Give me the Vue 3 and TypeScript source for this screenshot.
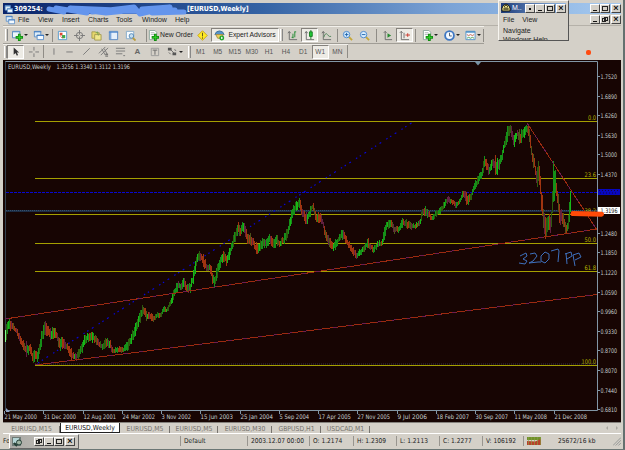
<template>
  <div class="desktop">
    <header class="titlebar">
      <svg class="app-icon" viewBox="0 0 12 12">
        <path v-for="(s, i) in icons.windows" :key="i" :d="s.d" :fill="s.fill || 'none'" :stroke="s.stroke || 'none'" />
      </svg>
      <b class="account">309254:</b>
      <b class="doc">[EURUSD,Weekly]</b>
      <div class="win-buttons">
        <i class="min"></i><i class="max"></i><i class="close">×</i>
      </div>
      <svg class="scribble" viewBox="0 0 146 15">
        <path d="M7 6L22 9L14 5L45 10L28 5L75 7L50 9L92 4L98 11L128 4L100 6L133 7L110 10L142 9L84 8L64 10L40 7" />
      </svg>
    </header>

    <nav class="menubar">
      <svg class="app-icon" viewBox="0 0 12 12">
        <path v-for="(s, i) in icons.windows" :key="i" :d="s.d" :fill="s.fill || 'none'" :stroke="s.stroke || 'none'" />
      </svg>
      <span v-for="m in menus" :key="m.label" :style="{ width: m.w + 'px' }">{{ m.label }}</span>
      <div class="win-buttons">
        <i class="min"></i><i class="restore"></i><i class="close">×</i>
      </div>
    </nav>

    <div v-for="(bar, b) in toolbars" :key="b" class="toolbar" :class="'bar' + b">
      <div
        v-for="(t, i) in bar"
        :key="i"
        class="tool"
        :class="[t.kind, { pressed: t.pressed }]"
        :style="{ width: t.w + 'px' }"
      >
        <svg v-if="t.icon" viewBox="0 0 12 12" class="icon">
          <path
            v-for="(s, k) in icons[t.icon]"
            :key="k"
            :d="s.d"
            :fill="s.fill || 'none'"
            :stroke="s.stroke || 'none'"
            :stroke-width="s.width || 1"
          />
        </svg>
        <span v-if="t.label">{{ t.label }}</span>
        <em v-if="t.arrow"></em>
      </div>
    </div>

    <main class="chart">
      <svg width="618" height="362" viewBox="3 60 618 362">
        <rect x="3" y="60" width="618" height="362" fill="#170503" />
        <path d="M5.5 410.5V61.5H597.5V410.5Z" fill="none" stroke="#8296a5" />
        <path d="M5.5 62V410" stroke="#34414f" />
        <path d="M475 62h6l-3 3.5z" fill="#7893a5" />

        <path d="M6 211H597" stroke="#1d2c43" stroke-width="2" />
        <path d="M6 210.5H597" stroke="#34506c" stroke-dasharray="1 1" />
        <path d="M6 192.5H597" stroke="#0808d0" stroke-dasharray="3 1" />

        <g v-for="f in fibs" :key="f.label">
          <line x1="35" x2="597" :y1="f.y" :y2="f.y" stroke="#a5a000" />
          <text
            :x="596 - f.w"
            :y="f.y - 1.5"
            :textLength="f.w"
            lengthAdjust="spacingAndGlyphs"
            class="fib"
          >{{ f.label }}</text>
        </g>
        <path d="M35 364H597" stroke="#36334a" stroke-dasharray="1 1" />

        <path d="M38 363L413 122" stroke="#0808d4" stroke-width="1.2" stroke-dasharray="1.5 3 1.5 4 2 6" />

        <g shape-rendering="crispEdges">
          <template v-for="c in candles" :key="c.x">
            <line :x1="c.x" :x2="c.x" :y1="c.high" :y2="c.low" :stroke="c.color" stroke-width="1" />
          </template>
        </g>
        <path d="M5.5 330V342" stroke="#80ff90" />

        <g stroke="#9c2a10" fill="none" shape-rendering="crispEdges">
          <path d="M5 319L597 229" />
          <path d="M35 365L597 294.5" />
          <path d="M527 123L597 230" />
        </g>
        <g stroke="#6e1d50" fill="none" stroke-dasharray="4 11" shape-rendering="crispEdges">
          <path d="M5 319L597 229" />
          <path d="M35 365L597 294.5" />
          <path d="M527 123L597 230" />
        </g>

        <g v-for="p in prices" :key="p.label">
          <path :d="`M597 ${p.y}h3`" stroke="#8296a5" />
          <text v-if="p.shown" x="600.5" :y="p.y + 2" textLength="16.5" lengthAdjust="spacingAndGlyphs">{{ p.label }}</text>
        </g>
        <rect x="598" y="189" width="22" height="6" fill="#0707c0" />
        <path d="M599 190.5h20M600 193h18" stroke="#170540" stroke-dasharray="1 2" />
        <rect x="598" y="207" width="22" height="7" fill="#fff" />
        <text x="600.5" y="213" textLength="17" lengthAdjust="spacingAndGlyphs" class="current">1.3196</text>
        <path d="M573 213.5L601.5 214.2" stroke="#ff4a08" stroke-width="5" stroke-linecap="round" />

        <g v-for="d in dates" :key="d.label">
          <path :d="`M${d.x + 0.5} 411v3`" stroke="#8296a5" />
          <text :x="d.x + 0.5" y="418.5" :textLength="d.w" lengthAdjust="spacingAndGlyphs">{{ d.label }}</text>
        </g>
        <path d="M6 408v4h4z" fill="#8fa4c4" />
        <text x="8" y="69" textLength="43" lengthAdjust="spacingAndGlyphs">EURUSD,Weekly</text>
        <text x="56.5" y="69" textLength="73.5" lengthAdjust="spacingAndGlyphs">1.3256 1.3340 1.3112 1.3196</text>

        <!-- hand-drawn note -->
        <g class="note">
          <path d="M520 256L526 253L527 256L523 259L527 261L525 264L519 263" />
          <path d="M530 254L535 253L537 256L533 261L529 263L538 262L541 262" />
          <path d="M545 252L541 256L541 261L545 263L549 259L549 254L545 252" />
          <path d="M551 251L558 249L559 251L558 262" />
          <path d="M566 253L567 264M565 254L571 252L572 256L567 259" />
          <path d="M573 255L575 266M573 255L579 253L581 257L575 260" />
        </g>
      </svg>
    </main>

    <div class="tabs">
      <div v-for="(t, i) in tabs" :key="i" class="tab" :class="{ active: i === 1 }" :style="{ width: t.w + 'px' }">
        {{ t.label }}
      </div>
      <div class="scroll"><i></i><i class="right"></i></div>
    </div>

    <footer class="status">
      <div v-for="(s, i) in status" :key="i" class="cell" :style="{ width: s.w + 'px' }">{{ s.label }}</div>
      <svg class="traffic" viewBox="0 0 15 8">
        <path d="M0 0h14v3H0z" fill="#71902b" />
        <path d="M0 8V4L8 4.500L14 2V8Z" fill="#b8402a" />
        <path d="M1.5 0V8M4.500 0V8M7.500 0V8M10.500 0V8M13.500 0V8" stroke="#86a345" stroke-width=".6" />
      </svg>
      <span class="kb">25672/16 kb</span>
      <svg class="grip" viewBox="0 0 9 9"><path d="M0 9L9 0M3 9L9 3M6 9L9 6" stroke="#8e9191" /></svg>
    </footer>

    <aside class="popup">
      <div class="popup-title">
        <svg viewBox="0 0 10 10">
          <path d="M1 8Q0 3 5 1Q10 3 9 8Z" fill="#f1e68c" stroke="#151510" />
          <path d="M3 4L5 2L7 4M2 6h6M4 4v3M6 4v3" stroke="#26240f" stroke-width=".8" fill="none" />
        </svg>
        <span>M..</span>
        <div class="win-buttons">
          <i class="dot"></i><i class="min"></i><i class="max"></i><i class="close">×</i>
        </div>
      </div>
      <p><span>File</span><span>View</span></p>
      <p>Navigate</p>
      <p class="cut">Windows Help</p>
    </aside>
    <div class="marker"></div>

    <aside class="mini">
      <svg viewBox="0 0 11 11">
        <path d="M0 1h9v9H0z" fill="#6d7a76" />
        <path d="M1 2h6v5H1z" fill="#b5d4d5" />
        <path d="M7 4a2.5 2.5 0 1 1 0 5a2.5 2.5 0 1 1 0-5" fill="#9fb5a4" stroke="#243f37" />
        <path d="M2 7l3 3" stroke="#243f37" stroke-width="2" />
      </svg>
      <div class="win-buttons">
        <i class="restore"></i><i class="min"></i><i class="max"></i><i class="close">×</i>
      </div>
    </aside>
  </div>
</template>

<script setup lang="ts">
interface Shape {
  d: string;
  fill?: string;
  stroke?: string;
  width?: number;
}

interface Tool {
  w: number;
  kind?: string;
  icon?: string;
  label?: string;
  arrow?: boolean;
  pressed?: boolean;
}

const icons: Record<string, Shape[]> = {
  windows: [
    { d: 'M1.5 1.5h7v6h-7z', fill: '#dcecf8', stroke: '#5c8fc8' },
    { d: 'M1 2h8', stroke: '#3c78c0' },
    { d: 'M4.5 5.5h7v5h-7z', fill: '#f4faff', stroke: '#5c8fc8' },
    { d: 'M4 6h8', stroke: '#3c78c0' },
  ],
  newChart: [
    { d: 'M.5 1.5h8v7h-8z', fill: '#edf5fa', stroke: '#5486b8' },
    { d: 'M1 2h8', stroke: '#5b94cc' },
    { d: 'M8 4v8M4 8h8', stroke: '#138c12', width: 3 },
    { d: 'M8 5v6M5 8h6', stroke: '#31d52c' },
  ],
  market: [
    { d: 'M1.5 1.5h9v9h-9z', fill: '#fff', stroke: '#5599cc' },
    { d: 'M3 3h3v3H3z', fill: '#dc4a34' },
    { d: 'M5.500 5.500h3.500v3.500h-3.500z', fill: '#40a848' },
    { d: 'M4 7l2 2', stroke: '#dc4a34' },
  ],
  target: [
    { d: 'M6 2.5a3.5 3.5 0 1 1 0 7a3.5 3.5 0 1 1 0-7', stroke: '#777' },
    { d: 'M6 0v5M6 7v5M0 6h5M7 6h5', stroke: '#777' },
  ],
  folder: [
    { d: 'M1 2h4l1 1h3v6H1z', fill: '#e7d76b', stroke: '#a59b52' },
    { d: 'M4 5h7v6H4z', fill: '#f0e78b', stroke: '#a59b52' },
    { d: 'M5 3l2-1 1 4', stroke: '#73a34d' },
  ],
  navigator: [
    { d: 'M1.5 1.5h9v9h-9z', fill: '#e5effa', stroke: '#5486c2' },
    { d: 'M1 2.5h10M3 2v8', stroke: '#4c86cc' },
  ],
  tester: [
    { d: 'M1.5 1.5h8v8h-8z', fill: '#f8fcff', stroke: '#83aac9' },
    { d: 'M7 4a2.5 2.5 0 1 1 0 5a2.5 2.5 0 1 1 0-5', fill: '#c4def1', stroke: '#5084b5' },
    { d: 'M8.5 8.5l3 3', stroke: '#b99b3a', width: 2 },
  ],
  order: [
    { d: 'M1.5.5h6l2 2v8h-8z', fill: '#fff', stroke: '#8aa49a' },
    { d: 'M3 3h4M3 5h4', stroke: '#a8aeb4' },
    { d: 'M8 4v8M4 8h8', stroke: '#138c12', width: 3 },
    { d: 'M8 5v6M5 8h6', stroke: '#31d52c' },
  ],
  alert: [
    { d: 'M6 .8L11.2 6L6 11.2L.8 6Z', fill: '#ffea24', stroke: '#c6a31a' },
    { d: 'M6 3v4M6 8v1.5', stroke: '#574a18' },
  ],
  expert: [
    { d: 'M1 5Q2 1 6 1Q10 1 11 5Z', fill: '#5794c8', stroke: '#3b719b' },
    { d: 'M2 5h8l-2 4H4z', fill: '#f0d35b', stroke: '#aa8d42' },
    { d: 'M8.500 6a2.7 2.7 0 1 1 0 5.400a2.7 2.7 0 1 1 0-5.400', fill: '#21a62d' },
    { d: 'M7.8 7.2l2.2 1.500-2.200 1.500z', fill: '#fff' },
  ],
  bars: [
    { d: 'M2.5 2v8.5H11M1 3.5l1.5-2L4 3.5', stroke: '#696969' },
    { d: 'M6.5 4v5M8.5 2v6M8 2h2M5 8h2', stroke: '#218b31' },
  ],
  candle: [
    { d: 'M2.5 2v8.5H11M1 3.5l1.5-2L4 3.5', stroke: '#696969' },
    { d: 'M7.5 0v10', stroke: '#167b21' },
    { d: 'M6 2h3v5H6z', fill: '#20c936', stroke: '#167b21' },
  ],
  line: [
    { d: 'M2.5 2v8.5H11M1 3.5l1.5-2L4 3.5', stroke: '#696969' },
    { d: 'M3 8Q5 2 7 5T11 7', stroke: '#4b8456' },
  ],
  zoomIn: [
    { d: 'M7 7l4 4', stroke: '#c6a738', width: 2 },
    { d: 'M5 1.5a3.5 3.5 0 1 1 0 7a3.5 3.5 0 1 1 0-7', fill: '#d6edff', stroke: '#4786ce' },
    { d: 'M5 3v4M3 5h4', stroke: '#1d63ac' },
  ],
  zoomOut: [
    { d: 'M7 7l4 4', stroke: '#c6a738', width: 2 },
    { d: 'M5 1.5a3.5 3.5 0 1 1 0 7a3.5 3.5 0 1 1 0-7', fill: '#d6edff', stroke: '#4786ce' },
    { d: 'M3 5h4', stroke: '#1d63ac' },
  ],
  scroll: [
    { d: 'M3.5 1.5v9H11M2 3l1.5-1.5L5 3', stroke: '#696969' },
    { d: 'M6 3.5l4 2.5-4 2.5z', fill: '#278b30' },
  ],
  shift: [
    { d: 'M2.5 1.5v9H11M1 3l1.5-1.5L4 3M5.5 3v6', stroke: '#696969' },
    { d: 'M7 5.5h5M9.5 3.5v4', stroke: '#c9362a' },
  ],
  clock: [
    { d: 'M6 1.2a4.8 4.8 0 1 1 0 9.6a4.8 4.8 0 1 1 0-9.6', fill: '#f5faff', stroke: '#3f78c3', width: 2 },
    { d: 'M6 3v3.5h2.5', stroke: '#47566d' },
  ],
  template: [
    { d: 'M1 1.5h10v9H1z', fill: '#f5faff', stroke: '#5594c8' },
    { d: 'M1 2h10', stroke: '#5594c8', width: 2 },
    { d: 'M2 5l2 1 2-1 2 1 2-1', stroke: '#c55d44' },
    { d: 'M2 9l2-1 2 1 2-1 2 1', stroke: '#50a050' },
  ],
  cursor: [{ d: 'M4 1.5v8l2-2 1.5 3 1.3-.7L7.5 7h2.5z', fill: '#333' }],
  cross: [{ d: 'M6.5 1v4M6.5 8v4M1 6.5h4M8 6.5h4', stroke: '#777' }],
  vline: [{ d: 'M6.5 2.5v7', stroke: '#777' }],
  hline: [{ d: 'M2.5 6.5h7', stroke: '#777' }],
  trend: [{ d: 'M2.5 9.5l7-7', stroke: '#777' }],
  channel: [
    { d: 'M1 8l7-7M3 10l8-8M4 3l4 7M7 3l3 6', stroke: '#777' },
    { d: 'M8 9h3M8 11h3', stroke: '#555' },
  ],
  fib: [{ d: 'M1 2.5h10M1 5.5h10M1 8.5h7M9 10.5h2', stroke: '#777' }],
  label: [
    { d: 'M2.5 2.5h8v8h-8z', stroke: '#999' },
    { d: 'M4 4.5h5M6.5 4.5v5', stroke: '#666' },
  ],
  arrows: [
    { d: 'M1 2h4v3H1zM6 7h4v3H6z', fill: '#555' },
    { d: 'M4 4l4 4M8 4l2 1M2 7l2 2', stroke: '#666' },
  ],
};

const menus = [
  { label: 'File', w: 20 },
  { label: 'View', w: 24 },
  { label: 'Insert', w: 26 },
  { label: 'Charts', w: 28 },
  { label: 'Tools', w: 26 },
  { label: 'Window', w: 33 },
  { label: 'Help', w: 20 },
]

const sep = (w = 3): Tool => ({ kind: 'sep', w });
const handle = (w = 4): Tool => ({ kind: 'handle', w });
const btn = (icon: string, w = 17, extra: Partial<Tool> = {}): Tool => ({ icon, w, ...extra });
const period = (label: string, pressed = false): Tool => ({ kind: 'period', label, w: 17.1, pressed });

const toolbars: Tool[][] = [
  [
    handle(6),
    btn('newChart', 21, { arrow: true }),
    btn('windows', 21, { arrow: true }),
    sep(2),
    btn('market', 18),
    btn('target'),
    btn('folder'),
    btn('navigator'),
    btn('tester'),
    { kind: 'gap', w: 6 },
    sep(2),
    btn('order', 47, { kind: 'wide', label: 'New Order' }),
    btn('alert', 17),
    btn('expert', 68, { kind: 'wide', label: 'Expert Advisors', pressed: true }),
    handle(5),
    btn('bars'),
    btn('candle', 17, { pressed: true }),
    btn('line'),
    sep(4),
    btn('zoomIn'),
    btn('zoomOut'),
    sep(6),
    btn('scroll'),
    btn('shift', 17, { pressed: true }),
    sep(5),
    btn('order', 23, { arrow: true }),
    btn('clock', 22, { arrow: true }),
    btn('template', 20, { arrow: true }),
    sep(1),
  ],
  [
    handle(4),
    btn('cursor', 17, { pressed: true }),
    btn('cross', 18),
    sep(3),
    btn('vline', 16),
    btn('hline'),
    btn('trend'),
    btn('channel'),
    btn('fib'),
    { kind: 'letter', label: 'A', w: 17 },
    btn('label'),
    btn('arrows', 23, { arrow: true }),
    handle(6),
    period('M1'),
    period('M5'),
    period('M15'),
    period('M30'),
    period('H1'),
    period('H4'),
    period('D1'),
    period('W1', true),
    period('MN'),
    sep(3),
  ],
];

const fibs = [
  { label: '0.0', y: 121.5, w: 8 },
  { label: '23.6', y: 178.5, w: 11.5 },
  { label: '38.2', y: 214.5, w: 11.5 },
  { label: '50.0', y: 243.5, w: 11.5 },
  { label: '61.8', y: 271.5, w: 11.5 },
  { label: '100.0', y: 365.5, w: 14.5 },
];

const prices = Array.from({ length: 18 }, (_, i) => ({
  label: (1.752 - i * 0.063).toFixed(4),
  y: Math.round(76 + i * 19.6) + 0.5,
  shown: i !== 6 && i !== 7,
}));

const dates = [
  ['21 May 2000', 4], ['31 Dec 2000', 43], ['12 Aug 2001', 83], ['24 Mar 2002', 122],
  ['3 Nov 2002', 161], ['15 Jun 2003', 200], ['25 Jan 2004', 240], ['5 Sep 2004', 279],
  ['17 Apr 2005', 318], ['27 Nov 2005', 357], ['9 Jul 2006', 397], ['18 Feb 2007', 436],
  ['30 Sep 2007', 475], ['11 May 2008', 514], ['21 Dec 2008', 554],
].map(([label, x]) => ({ label: String(label), x: Number(x), w: String(label).length * 2.95 }));

// x, highest and lowest y of the price band
const band: [number, number, number][] = [
  [6, 327, 342], [9, 319, 330], [13, 323, 331], [17, 329, 335], [20, 335, 343], [23, 340, 348],
  [26, 342, 357], [30, 343, 352], [33, 353, 365], [35, 348, 360], [38, 352, 361], [40, 340, 353],
  [42, 330, 345], [45, 321, 333], [49, 328, 338], [52, 328, 341], [56, 329, 340], [60, 338, 350],
  [63, 338, 349], [67, 342, 350], [70, 347, 358], [74, 353, 360], [77, 354, 361], [80, 345, 357],
  [84, 335, 350], [87, 333, 343], [91, 331, 341], [95, 334, 343], [99, 340, 347], [102, 343, 350],
  [106, 338, 348], [110, 339, 348], [113, 347, 355], [118, 346, 352], [124, 346, 353], [128, 341, 350],
  [131, 334, 345], [135, 326, 337], [138, 316, 330], [141, 309, 320], [143, 304, 316], [147, 312, 321],
  [150, 311, 320], [154, 315, 322], [158, 312, 318], [161, 313, 319], [163, 305, 313], [167, 307, 314],
  [170, 300, 307], [173, 292, 302], [178, 281, 290], [182, 283, 290], [184, 276, 288], [187, 285, 292],
  [190, 283, 293], [193, 273, 285], [195, 261, 275], [198, 251, 262], [201, 251, 261], [204, 256, 267],
  [207, 263, 275], [210, 262, 272], [213, 273, 285], [215, 275, 287], [218, 263, 275], [222, 252, 263],
  [225, 252, 262], [227, 256, 267], [230, 247, 258], [233, 236, 248], [236, 227, 240], [238, 220, 235],
  [241, 226, 237], [244, 219, 230], [247, 231, 243], [252, 235, 245], [255, 242, 251], [258, 245, 255],
  [263, 237, 248], [267, 240, 248], [270, 232, 243], [273, 240, 249], [277, 234, 245], [280, 240, 248],
  [283, 236, 245], [287, 229, 241], [290, 216, 228], [293, 205, 218], [296, 202, 212], [300, 196, 207],
  [302, 208, 218], [307, 213, 225], [310, 208, 217], [313, 201, 210], [316, 212, 223], [320, 213, 222],
  [323, 218, 228], [326, 229, 242], [330, 238, 247], [333, 242, 252], [337, 238, 248], [340, 232, 241],
  [343, 229, 240], [347, 237, 245], [350, 243, 250], [353, 246, 255], [357, 252, 259], [362, 247, 254],
  [365, 244, 251], [368, 238, 247], [373, 246, 253], [378, 241, 248], [382, 241, 247], [384, 229, 242],
  [387, 219, 230], [391, 218, 227], [394, 225, 233], [399, 225, 233], [402, 219, 227], [408, 220, 229],
  [413, 224, 230], [417, 222, 228], [420, 219, 226], [423, 206, 215], [428, 209, 217], [432, 216, 222],
  [437, 209, 217], [442, 205, 212], [447, 196, 204], [452, 198, 204], [456, 202, 208], [460, 198, 204],
  [463, 190, 197], [467, 193, 205], [471, 193, 201], [474, 183, 192], [478, 176, 184], [482, 168, 178],
  [485, 154, 167], [489, 165, 175], [493, 159, 168], [496, 157, 175], [499, 157, 171], [502, 153, 162],
  [504, 141, 151], [507, 126, 142], [511, 122, 135], [514, 135, 147], [517, 129, 138], [521, 130, 146],
  [524, 127, 138], [527, 123, 131], [530, 130, 143], [532, 148, 164], [535, 161, 171], [537, 172, 190],
  [539, 158, 178], [541, 185, 205], [544, 210, 235], [546, 215, 237], [549, 213, 227], [551, 215, 235],
  [552, 205, 220], [553, 163, 205], [556, 174, 192], [559, 198, 222], [562, 211, 226], [565, 218, 232],
  [567, 225, 234], [569, 208, 227], [570, 193, 215],
];

function buildCandles() {
  const out: { x: number; high: number; low: number; color: string }[] = [];
  let seed = 17;
  const rand = () => {
    seed = (seed * 16807) % 2147483647;
    return seed / 2147483647;
  };
  let k = 0;
  for (let x = 6.5; x <= 570.5; x += 1) {
    while (k < band.length - 2 && band[k + 1][0] < x) k++;
    const [x0, h0, l0] = band[k];
    const [x1, h1, l1] = band[k + 1];
    const f = Math.max(0, Math.min(1, (x - x0) / (x1 - x0)));
    const size = (l0 + (l1 - l0) * f) - (h0 + (h1 - h0) * f);
    const high = h0 + (h1 - h0) * f + (rand() - 0.3) * size * 0.4;
    const low = l0 + (l1 - l0) * f - (rand() - 0.3) * size * 0.4;
    const rising = (h1 - h0 + l1 - l0) / 2 < (rand() - 0.5) * 9;
    const r = rand();
    const color = rising
      ? r < 0.55 ? '#159018' : r < 0.82 ? '#2c5c0e' : '#17b817'
      : r < 0.62 ? '#a03410' : r < 0.87 ? '#622040' : '#4d531a';
    out.push({ x, high, low, color });
  }
  return out;
}

const candles = buildCandles();

const tabs = [
  { label: 'EURUSD,M15', w: 57 },
  { label: 'EURUSD,Weekly', w: 60 },
  { label: 'EURUSD,M5', w: 50 },
  { label: 'EURUSD,M5', w: 48 },
  { label: 'EURUSD,M30', w: 54 },
  { label: 'GBPUSD,H1', w: 49 },
  { label: 'USDCAD,M1', w: 49 },
];

const status = [
  { label: 'Fo', w: 178 },
  { label: 'Default', w: 67 },
  { label: '2003.12.07 00:00', w: 62 },
  { label: 'O: 1.2174', w: 44 },
  { label: 'H: 1.2309', w: 43 },
  { label: 'L: 1.2113', w: 43 },
  { label: 'C: 1.2277', w: 43 },
  { label: 'V: 106192', w: 41 },
];
</script>

<style>
body {
  margin: 0;
  overflow: hidden;
}
</style>

<style scoped>
.desktop {
  position: relative;
  box-sizing: border-box;
  width: 625px;
  height: 450px;
  padding: 3px 4px 1px 3px;
  overflow: hidden;
  background: #d4d0c8;
  border-bottom: 1px solid #6b7775;
  font-family: 'Liberation Sans', Arial, sans-serif;
  font-size: 7px;
  line-height: 8px;
  color: #222;
  box-shadow: inset -2px 0 #64706f;
}

.titlebar {
  position: relative;
  display: flex;
  align-items: center;
  height: 11px;
  color: #fff;
  font-family: 'DejaVu Sans Condensed', sans-serif;
  background: linear-gradient(90deg, #0a246a, #3563a4 42%, #7ba3d6 72%, #a6caf0);
}

.app-icon {
  width: 10px;
  height: 10px;
  flex: none;
}

.titlebar .app-icon {
  width: 9px;
  margin-left: 1px;
}

.account {
  width: 173px;
  margin-left: 1px;
  font-size: 7px;
}

.doc {
  font-size: 7px;
  letter-spacing: -0.1px;
}

.scribble {
  position: absolute;
  left: 39px;
  top: 0;
  width: 146px;
  height: 15px;
  z-index: 2;
}

.scribble path {
  fill: none;
  stroke: #6495ed;
  stroke-width: 5;
  stroke-linecap: round;
  stroke-linejoin: round;
}

.win-buttons {
  display: flex;
  margin-left: auto;
}

.win-buttons i {
  position: relative;
  box-sizing: border-box;
  width: 10px;
  height: 9px;
  background: #d4d0c8;
  border: 1px solid;
  border-color: #fff #444 #444 #fff;
  color: #111;
  font: bold 9px/7px 'Liberation Sans', sans-serif;
  text-align: center;
}

.win-buttons .close {
  margin-left: 1px;
}

.min::after,
.max::after,
.restore::after,
.restore::before,
.dot::after {
  content: '';
  position: absolute;
  box-sizing: border-box;
}

.min::after {
  left: 2px;
  bottom: 1px;
  width: 4px;
  height: 1px;
  background: #111;
}

.max::after {
  inset: 1px;
  border: 1px solid #222;
}

.restore::after {
  left: 1px;
  bottom: 1px;
  width: 4px;
  height: 4px;
  border: 1px solid #222;
}

.restore::before {
  right: 1px;
  top: 1px;
  width: 4px;
  height: 4px;
  border: 1px solid #222;
}

.dot::after {
  left: 3px;
  top: 3px;
  width: 2px;
  height: 2px;
  background: #111;
}

.menubar {
  display: flex;
  align-items: center;
  height: 12px;
  border-bottom: 1px solid #b5b1a9;
  box-sizing: border-box;
}

.menubar .app-icon {
  margin: 0 3px 0 2px;
}

.toolbar {
  display: flex;
  align-items: center;
  box-sizing: border-box;
  border-top: 1px solid #f2f0eb;
  border-bottom: 1px solid #a09d96;
}

.bar0 {
  width: 481px;
  height: 18px;
}

.bar1 {
  width: 345px;
  height: 15px;
  margin-bottom: 1px;
  border-bottom-color: transparent;
}

.tool {
  display: flex;
  flex: none;
  align-items: center;
  justify-content: center;
  box-sizing: border-box;
  height: 14px;
}

.tool.pressed {
  background: #edebe5;
  border: 1px solid;
  border-color: #85827d #fff #fff #85827d;
}

.icon {
  flex: none;
  width: 11px;
  height: 11px;
}

.tool em {
  margin-left: 1px;
  border: 2px solid transparent;
  border-top-color: #222;
  border-bottom: 0;
}

.sep::before {
  content: '';
  width: 1px;
  height: 13px;
  background: #8f8c86;
}

.handle::before {
  content: '';
  width: 1px;
  height: 12px;
  border-left: 1px solid #fff;
  border-right: 1px solid #888;
}

.wide {
  white-space: nowrap;
  gap: 1px;
  font-size: 6.8px;
}

.wide.pressed {
  gap: 3px;
}

.period {
  font-size: 6.5px;
  color: #555;
}

.letter {
  font-size: 8px;
  font-weight: bold;
  color: #666;
}

.chart {
  height: 362px;
  overflow: hidden;
}

.chart svg {
  display: block;
}

.chart text {
  fill: #c9d0d0;
  font-family: 'DejaVu Sans Condensed', sans-serif;
  font-size: 6.3px;
}

.chart .fib {
  fill: #b8b500;
}

.chart .current {
  fill: #111;
}

.note path {
  fill: none;
  stroke: #3e70bd;
  stroke-width: 1;
}

.tabs {
  display: flex;
  height: 12px;
  font-family: 'DejaVu Sans Condensed', sans-serif;
  font-size: 6.8px;
  line-height: 12px;
  color: #77746f;
  border-top: 1px solid #85827d;
  border-bottom: 1px solid #fff;
  box-sizing: border-box;
}

.tab {
  position: relative;
  box-sizing: border-box;
  text-align: center;
  white-space: nowrap;
}

.tab:not(.active)::after {
  content: '';
  position: absolute;
  right: 0;
  top: 3px;
  width: 1px;
  height: 7px;
  background: #77746f;
}

.tab.active {
  color: #111;
  background: #fff;
  border: 1px solid #222;
  border-top: 0;
  line-height: 11px;
}

.scroll {
  display: flex;
  align-items: center;
  gap: 8px;
  margin-left: auto;
  margin-right: 3px;
}

.scroll i {
  border: 2px solid transparent;
  border-right-color: #aaa7a0;
  border-left: 0;
}

.scroll .right {
  border-left: 2px solid #aaa7a0;
  border-right: 0;
}

.status {
  display: flex;
  align-items: center;
  height: 14px;
  font-family: 'DejaVu Sans Condensed', sans-serif;
  font-size: 6.6px;
}

.cell {
  box-sizing: border-box;
  height: 10px;
  padding-left: 3px;
  line-height: 10px;
  border-right: 1px solid #98958f;
  white-space: nowrap;
}

.cell:first-child {
  padding-left: 0;
}

.traffic {
  width: 15px;
  height: 8px;
  margin-left: 3px;
}

.kb {
  margin-left: 16px;
}

.grip {
  width: 8px;
  height: 9px;
  margin-left: auto;
}

.popup {
  position: absolute;
  left: 498px;
  top: 0;
  z-index: 3;
  box-sizing: border-box;
  width: 71px;
  height: 41px;
  padding: 2px;
  overflow: hidden;
  background: #d4d0c8;
  border: 1px solid;
  border-color: #f7f5f0 #555 #555 #f7f5f0;
}

.popup-title {
  display: flex;
  align-items: center;
  height: 10px;
  color: #fff;
  background: linear-gradient(90deg, #1d3c7b, #91b8e4);
}

.popup-title svg {
  width: 10px;
  height: 10px;
}

.popup-title span {
  margin-left: 1px;
}

.popup p {
  display: flex;
  gap: 8px;
  margin: 2px 0 0 2px;
  height: 9px;
  line-height: 9px;
}

.popup .cut {
  margin-top: 0;
}

.marker {
  position: absolute;
  left: 586px;
  top: 50px;
  width: 5px;
  height: 5px;
  border-radius: 2px;
  background: #ff4a10;
}

.mini {
  position: absolute;
  left: 9px;
  top: 434px;
  display: flex;
  align-items: center;
  box-sizing: border-box;
  width: 70px;
  height: 15px;
  padding: 0 3px 0 2px;
  background: linear-gradient(90deg, #aaa9a5, #cbc8c1);
  border: 1px solid;
  border-color: #fff #666 #666 #fff;
}

.mini svg {
  width: 11px;
  height: 11px;
}
</style>
